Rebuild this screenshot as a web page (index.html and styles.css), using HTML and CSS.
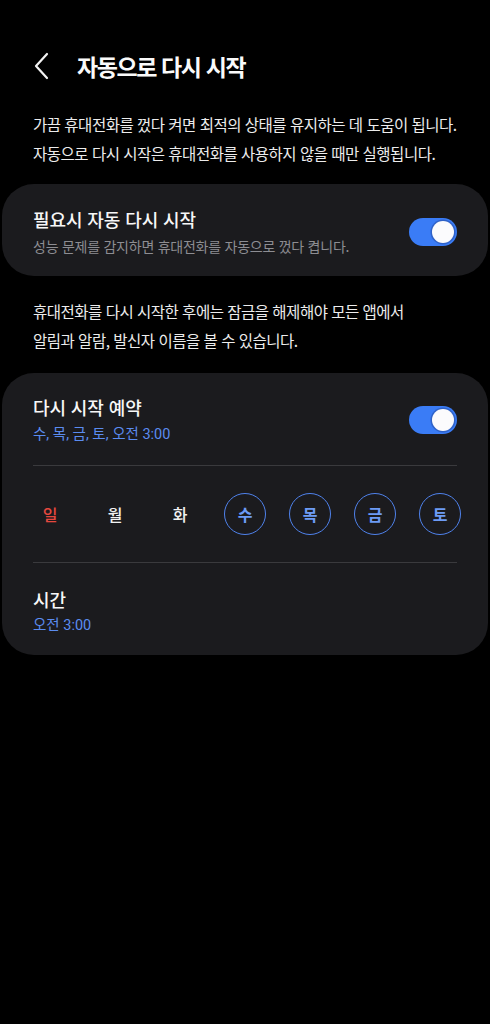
FILE: index.html
```html
<!DOCTYPE html>
<html lang="ko">
<head>
<meta charset="utf-8">
<link rel="stylesheet" href="styles.css">
</head>
<body>
<div class="screen">
  <header class="header">
    <svg class="back" width="16" height="28" viewBox="0 0 16 28"><polyline points="13,2 2,14 13,26" fill="none" stroke="#f2f2f2" stroke-width="2.2" stroke-linecap="round" stroke-linejoin="round"/></svg>
    <h1 class="title">자동으로 다시 시작</h1>
  </header>

  <p class="desc desc-1">가끔 휴대전화를 껐다 켜면 최적의 상태를 유지하는 데 도움이 됩니다.<br>자동으로 다시 시작은 휴대전화를 사용하지 않을 때만 실행됩니다.</p>

  <section class="card card-1">
    <div class="row">
      <div class="text">
        <div class="item-title">필요시 자동 다시 시작</div>
        <div class="item-sub gray">성능 문제를 감지하면 휴대전화를 자동으로 껐다 켭니다.</div>
      </div>
      <div class="toggle"><div class="knob"></div></div>
    </div>
  </section>

  <p class="desc desc-2">휴대전화를 다시 시작한 후에는 잠금을 해제해야 모든 앱에서<br>알림과 알람, 발신자 이름을 볼 수 있습니다.</p>

  <section class="card card-2">
    <div class="row">
      <div class="text">
        <div class="item-title">다시 시작 예약</div>
        <div class="item-sub blue">수, 목, 금, 토, 오전 3:00</div>
      </div>
      <div class="toggle"><div class="knob"></div></div>
    </div>
    <div class="divider div-1"></div>
    <div class="days">
      <span class="day sun">일</span>
      <span class="day">월</span>
      <span class="day">화</span>
      <span class="day on">수</span>
      <span class="day on">목</span>
      <span class="day on">금</span>
      <span class="day on">토</span>
    </div>
    <div class="divider div-2"></div>
    <div class="text time">
      <div class="item-title">시간</div>
      <div class="item-sub blue">오전 3:00</div>
    </div>
  </section>
</div>
</body>
</html>
```

FILE: styles.css
```css
* { box-sizing: border-box; }
html, body {
  margin: 0;
  padding: 0;
  background: #000;
}
body {
  font-family: "Noto Sans CJK KR", "Noto Sans", sans-serif;
  color: #f5f5f5;
  width: 490px;
  min-height: 1024px;
}
.screen {
  display: flex;
  flex-direction: column;
}
.header {
  margin-top: 44px;
  height: 44px;
  display: flex;
  align-items: center;
  padding-left: 34px;
}
.back {
  display: block;
  flex: none;
}
.title {
  margin: 0 0 0 27px;
  font-size: 23px;
  font-weight: 700;
  letter-spacing: -1.4px;
  line-height: 30px;
  color: #fafafa;
}
.desc {
  margin: 0;
  padding: 0 33px;
  font-size: 15.5px;
  line-height: 28.5px;
  letter-spacing: -0.5px;
  color: #ececec;
  font-weight: 400;
  white-space: nowrap;
}
.desc-1 { margin-top: 22px; }
.desc-2 { margin-top: 21px; }
.card {
  margin: 0 2px;
  background: #1b1b1e;
  border-radius: 32px;
  padding: 0 31px;
}
.card-1 {
  margin-top: 17px;
  padding-top: 23px;
  padding-bottom: 20px;
}
.card-2 {
  margin-top: 19px;
  padding-top: 22px;
  padding-bottom: 19px;
}
.row {
  display: flex;
  align-items: center;
  justify-content: space-between;
}
.text {
  display: flex;
  flex-direction: column;
}
.item-title {
  font-size: 18px;
  line-height: 24px;
  font-weight: 500;
  letter-spacing: -0.1px;
  color: #f7f7f7;
}
.item-sub {
  margin-top: 5px;
  font-size: 14px;
  line-height: 20px;
  letter-spacing: -0.25px;
}
.card-2 .item-sub { margin-top: 6px; }
.gray { color: #8d8d92; }
.blue {
  font-family: "Roboto", "Noto Sans CJK KR", sans-serif;
  color: #5b8cf0;
  letter-spacing: 0;
  font-size: 14.5px;
}
.toggle {
  flex: none;
  width: 48px;
  height: 28px;
  border-radius: 14px;
  background: #3a7cf6;
  display: flex;
  align-items: center;
  justify-content: flex-end;
  padding-right: 3px;
}
.knob {
  width: 22px;
  height: 22px;
  border-radius: 50%;
  background: #fbfbfd;
  box-shadow: 0 0 0 1.5px #2f62c8;
}
.divider {
  height: 1px;
  background: #3a3a3d;
}
.div-1 { margin-top: 20px; }
.div-2 { margin-top: 27px; }
.days {
  margin: 27px -4px 0 -4px;
  display: flex;
  justify-content: space-between;
}
.day {
  width: 42px;
  height: 42px;
  border-radius: 50%;
  display: flex;
  align-items: center;
  justify-content: center;
  font-size: 16px;
  font-weight: 500;
  color: #f2f2f2;
}
.day.sun { color: #e5483e; }
.day.on {
  border: 1.5px solid #4f82ec;
  color: #6d9bf5;
  font-weight: 700;
}
.time { margin-top: 24px; }
.time .item-sub { margin-top: 5px; }
```
